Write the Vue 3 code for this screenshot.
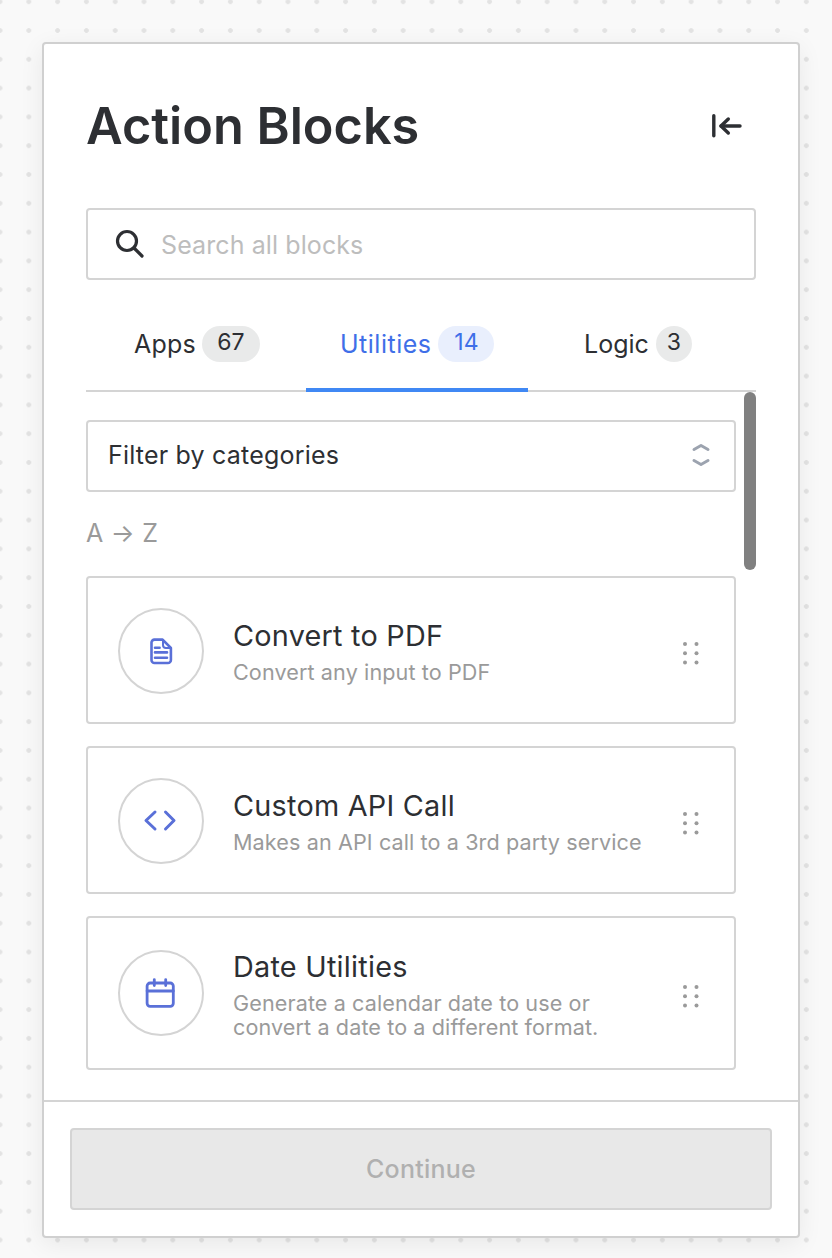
<script setup>
const tabs = [
  { key: 'apps', label: 'Apps', count: 67 },
  { key: 'utilities', label: 'Utilities', count: 14 },
  { key: 'logic', label: 'Logic', count: 3 },
]
const blocks = [
  { key: 'pdf', title: 'Convert to PDF', desc: ['Convert any input to PDF'] },
  { key: 'api', title: 'Custom API Call', desc: ['Makes an API call to a 3rd party service'] },
  { key: 'date', title: 'Date Utilities', desc: ['Generate a calendar date to use or', 'convert a date to a different format.'] },
]
const dots = [3, 14.5].flatMap((x) => [3, 12.3, 21.6].map((y) => ({ x, y })))
</script>

<template>
  <div class="canvas">
    <aside class="panel">
      <header class="head">
        <h1>Action Blocks</h1>
        <svg class="collapse" width="32" height="32" viewBox="0 0 32 32" fill="none" stroke="#2d2f33" stroke-width="3.4" stroke-linecap="round" stroke-linejoin="round">
          <path d="M1.8 5.7v20" />
          <path d="M9 16h19" />
          <path d="M16.3 9L9 16l7.3 7" />
        </svg>
      </header>

      <label class="search">
        <svg width="32" height="32" viewBox="0 0 32 32" fill="none" stroke="#2d2f33" stroke-width="3.2" stroke-linecap="round">
          <circle cx="14" cy="14" r="9.5" />
          <path d="M21 21l8 8" />
        </svg>
        <input type="text" placeholder="Search all blocks" />
      </label>

      <nav class="tabs">
        <div v-for="t in tabs" :key="t.key" class="tab" :class="['tab-' + t.key, { active: t.key === 'utilities' }]">
          <span>{{ t.label }}</span>
          <span class="badge">{{ t.count }}</span>
        </div>
      </nav>

      <div class="list">
        <div class="scrollbar"></div>
        <div class="select">
          <span>Filter by categories</span>
          <svg width="20" height="26" viewBox="0 0 20 26" fill="none" stroke="#9ca3af" stroke-width="3" stroke-linecap="round" stroke-linejoin="round">
            <path d="M3 7.5l7-4 7 4" />
            <path d="M3 18.5l7 4 7-4" />
          </svg>
        </div>
        <div class="sort">A → Z</div>

        <article v-for="b in blocks" :key="b.key" class="card" :class="{ tall: b.desc.length > 1 }">
          <div class="circle">
            <svg v-if="b.key === 'pdf'" class="doc" width="32" height="32" viewBox="0 0 32 32" fill="none" stroke="#5a70d8" stroke-width="2.6" stroke-linecap="round" stroke-linejoin="round">
              <path d="M9 4.6h8.6L25.9 13v12a3 3 0 0 1-3 3H9.5a3 3 0 0 1-3-3V7.6a3 3 0 0 1 3-3z" />
              <path d="M18 5v5a3 3 0 0 0 3 3h4.5" stroke-width="2" />
              <path d="M10 12.7h4.6M10 17.4h12M10 22.7h12" />
            </svg>
            <svg v-else-if="b.key === 'api'" width="36" height="24" viewBox="0 0 36 24" fill="none" stroke="#5a70d8" stroke-width="3" stroke-linecap="round" stroke-linejoin="round">
              <path d="M12 3l-9 8.5 9 8.5" />
              <path d="M22.5 3l8.5 8.5-8.5 8.5" />
            </svg>
            <svg v-else width="32" height="32" viewBox="0 0 32 32" fill="none" stroke="#5a70d8" stroke-width="2.8" stroke-linecap="round" stroke-linejoin="round">
              <rect x="2.1" y="6" width="26.2" height="23.3" rx="3" />
              <path d="M2.1 14h26.2M9.3 2.6v6M20.7 2.6v6" />
            </svg>
          </div>
          <div class="text">
            <h2>{{ b.title }}</h2>
            <p v-for="line in b.desc" :key="line">{{ line }}</p>
          </div>
          <svg class="grip" width="18" height="25" viewBox="0 0 18 25" fill="#9a9a9a">
            <circle v-for="(d, i) in dots" :key="i" :cx="d.x" :cy="d.y" r="2" />
          </svg>
        </article>
      </div>

      <footer class="foot">
        <button class="continue" type="button" disabled>Continue</button>
      </footer>
    </aside>
  </div>
</template>

<style>
html, body { margin: 0; background: #f9f9f9; }
</style>

<style scoped>
.canvas {
  box-sizing: border-box;
  width: 832px;
  height: 1258px;
  padding: 42px 32px 20px 42px;
  background-color: #f9f9f9;
  background-image: radial-gradient(circle, #e3e3e3 2px, transparent 2.8px);
  background-size: 28.8px 28.8px;
  background-position: -14.4px -12.7px;
  font-family: Inter, "Noto Sans", sans-serif;
  color: #2d2f33;
  overflow: hidden;
}
.panel {
  box-sizing: border-box;
  width: 758px;
  height: 1196px;
  display: flex;
  flex-direction: column;
  background: #fff;
  border: 2px solid #d0d0d0;
  border-radius: 4px;
  box-shadow: 0 6px 24px rgba(0, 0, 0, 0.07);
}
.head {
  display: flex;
  align-items: center;
  justify-content: space-between;
  height: 56px;
  margin: 54px 54px 54px 42px;
}
h1 {
  margin: 0;
  font-size: 50.4px;
  line-height: 56px;
  font-weight: 600;
}
.collapse { display: block; }
.search {
  box-sizing: border-box;
  display: flex;
  align-items: center;
  gap: 16px;
  height: 72px;
  margin: 0 42px;
  padding: 0 0 0 25px;
  border: 2px solid #d4d4d4;
  border-radius: 4px;
}
.search svg { margin-top: -2px; }
.search input {
  flex: 1;
  min-width: 0;
  margin-top: 2px;
  border: 0;
  outline: 0;
  padding: 0;
  font: 400 25px/32px Inter, "Noto Sans", sans-serif;
  letter-spacing: 0.1px;
  color: #2d2f33;
  background: transparent;
}
.search input::placeholder { color: #bdbdbd; opacity: 1; }
.tabs {
  box-sizing: border-box;
  display: flex;
  height: 112px;
  margin: 0 42px;
  border-bottom: 2px solid #d4d4d4;
}
.tab {
  box-sizing: border-box;
  display: flex;
  align-items: center;
  gap: 7px;
  height: 112px;
  padding-top: 36px;
  padding-bottom: 16px;
  margin-bottom: -2px;
  font-size: 25px;
  line-height: 32px;
  letter-spacing: 0.2px;
  border-bottom: 4px solid transparent;
}
.tab-apps { width: 220px; padding-left: 48px; gap: 6px; }
.tab-utilities { width: 222px; padding-left: 34px; letter-spacing: 0.5px; }
.tab-logic { width: 228px; padding-left: 56px; letter-spacing: 0; }
.tab.active { color: #3f6fe8; border-bottom-color: #4088f4; }
.badge {
  box-sizing: border-box;
  width: 58px;
  height: 36px;
  border-radius: 18px;
  background: #e9eaea;
  font-size: 23px;
  line-height: 33px;
  letter-spacing: 0;
  text-align: center;
}
.tab-utilities .badge { width: 56px; }
.tab-logic .badge { width: 36px; }
.tab.active .badge { background: #e9effd; }
.list {
  position: relative;
  flex: 1;
  min-height: 0;
  overflow: hidden;
  margin-left: 42px;
  padding-top: 28px;
}
.scrollbar {
  position: absolute;
  top: 0;
  left: 658px;
  width: 12px;
  height: 178px;
  border-radius: 6px;
  background: #808080;
}
.select {
  box-sizing: border-box;
  display: flex;
  align-items: center;
  justify-content: space-between;
  width: 650px;
  height: 72px;
  padding: 0 23px 0 20px;
  border: 2px solid #d4d4d4;
  border-radius: 4px;
  font-size: 25px;
  letter-spacing: 0.2px;
}
.select span { margin-top: -2px; }
.select svg { margin-top: -2px; }
.sort {
  height: 32px;
  margin: 25px 0 27px;
  font-size: 25px;
  line-height: 32px;
  letter-spacing: 0.25px;
  color: #9a9a9a;
}
.card {
  box-sizing: border-box;
  display: flex;
  align-items: center;
  width: 650px;
  min-height: 148px;
  margin-bottom: 22px;
  padding: 0 30px;
  border: 2px solid #d4d4d4;
  border-radius: 4px;
}
.card.tall { min-height: 154px; }
.card:not(.tall) .circle { margin-top: 2px; }
.circle {
  box-sizing: border-box;
  flex: none;
  display: flex;
  align-items: center;
  justify-content: center;
  width: 86px;
  height: 86px;
  border: 2px solid #d4d4d4;
  border-radius: 50%;
}
.doc { margin-left: -1px; }
.text {
  flex: 1;
  min-width: 0;
  margin-top: 2px;
  padding-left: 29px;
}
.card.tall .text { margin-top: 1px; }
h2 {
  margin: 0 0 6px;
  font-size: 28.8px;
  line-height: 36px;
  font-weight: 400;
  letter-spacing: 0.25px;
}
p {
  margin: 0;
  font-size: 21.6px;
  line-height: 24px;
  letter-spacing: 0.1px;
  color: #9a9a9a;
}
.grip {
  flex: none;
  margin-top: 6px;
  margin-right: 4px;
}
.foot {
  flex: none;
  box-sizing: border-box;
  height: 136px;
  padding: 26px 26px 0;
  border-top: 2px solid #d4d4d4;
}
.continue {
  display: block;
  box-sizing: border-box;
  width: 100%;
  height: 82px;
  border: 2px solid #d4d4d4;
  border-radius: 4px;
  background: #e8e8e8;
  color: #b0b0b0;
  font: 500 25px Inter, "Noto Sans", sans-serif;
  letter-spacing: 0.25px;
}
</style>
